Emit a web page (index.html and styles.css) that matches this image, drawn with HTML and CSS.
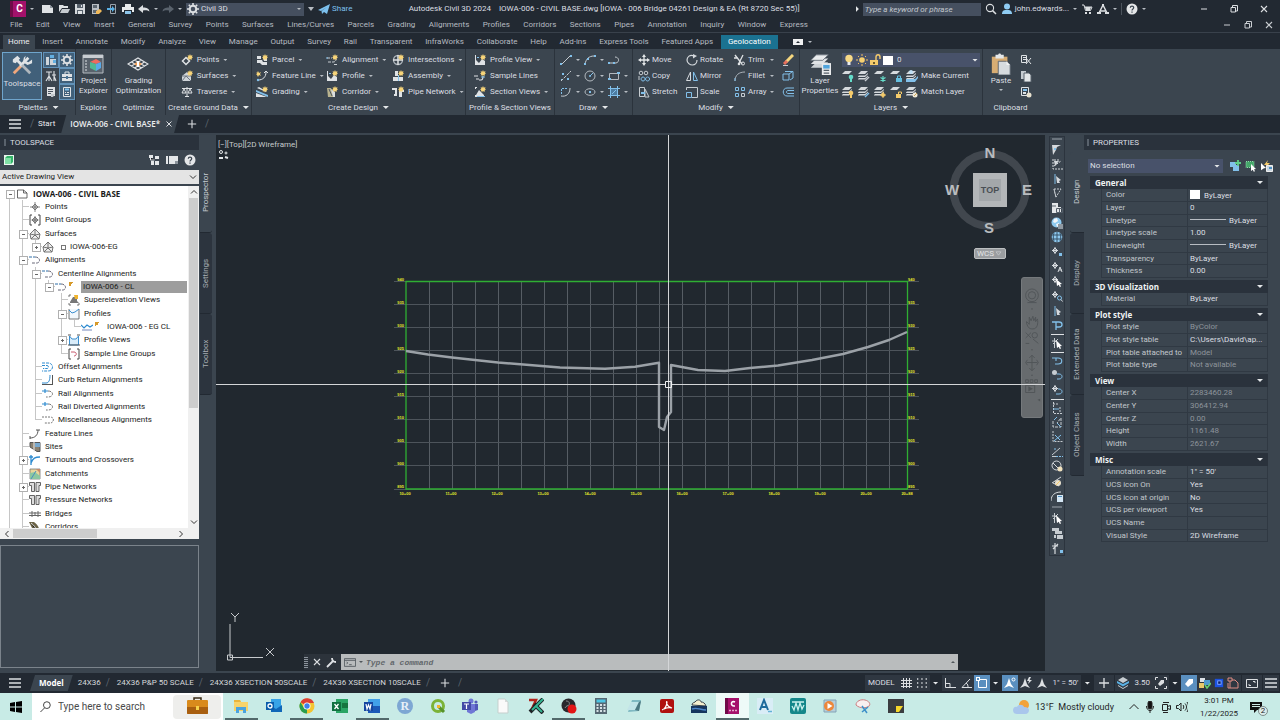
FILE: index.html
```html
<!DOCTYPE html>
<html lang="en">
<head>
<meta charset="utf-8">
<title>Autodesk Civil 3D 2024</title>
<link rel="stylesheet" href="styles.css">
</head>
<body>
<svg class="defs" aria-hidden="true">
<defs>
<symbol id="new" viewBox="0 0 12 12"><path fill="#dfe2e5" d="M0 2h8l3 3v5H0z"/><path fill="#8c949c" d="M8 2v3h3z"/></symbol>
<symbol id="open" viewBox="0 0 12 12"><path fill="#dfe2e5" d="M1 2h4l1 1h4v2H4L1 9z"/><path fill="#c6cbd0" d="M4 6h8l-2 4H2z"/></symbol>
<symbol id="save" viewBox="0 0 12 12"><path fill="#d5d9dd" d="M1 1h10v10H1z"/><path fill="#56606b" d="M3 1h6v4H3zM3 7h6v4H3z"/><path fill="#dfe2e5" d="M4 8h4v3H4zM7 2h1v2H7z"/></symbol>
<symbol id="saveas" viewBox="0 0 12 12"><path fill="#b9bec4" d="M2 1h7v10H2z"/><path fill="#5c6670" d="M3 2h4v3H3zM3 7h4v3H3z"/><path fill="#f0b95a" d="M6 8l4-2 2 2-3 3H6z"/></symbol>
<symbol id="export" viewBox="0 0 12 12"><path fill="none" stroke="#9aa3ab" d="M4.500 1.500h5v9h-5z"/><path fill="#5ab0e4" d="M1 5h5V3l3 3-3 3V7H1z"/></symbol>
<symbol id="print" viewBox="0 0 12 12"><path fill="#e8eaec" d="M3 1h6v3H3zM0 4h12v5h-2V7H2v2H0z"/><path fill="#8ec5ea" d="M3 8h6v3H3z"/></symbol>
<symbol id="undo" viewBox="0 0 12 12"><path fill="currentColor" d="M0 6l5-4v2.500c4 0 6 1 6.500 4-2-1.500-4-1.500-6.500-1V10z"/></symbol>
<symbol id="redo" viewBox="0 0 12 12"><path fill="#59626c" d="M12 6L7 2v2.500c-4 0-6 1-6.500 4 2-1.500 4-1.500 6.500-1V10z"/></symbol>
<symbol id="gear" viewBox="0 0 12 12"><circle cx="6" cy="6" r="3.300" fill="none" stroke="currentColor" stroke-width="2"/><path stroke="currentColor" stroke-width="1.600" d="M6 0v2M6 10v2M0 6h2M10 6h2M1.800 1.800l1.400 1.400M8.800 8.800l1.400 1.400M1.800 10.200l1.400-1.400M8.800 3.200l1.400-1.400"/></symbol>
<symbol id="plane" viewBox="0 0 12 12"><path fill="#7cc0ee" d="M0 7l12-6-3 10-3-2-2 2-.5-3L9 4 3 8z"/></symbol>
<symbol id="mag" viewBox="0 0 12 12"><circle cx="5" cy="5" r="3.600" fill="none" stroke="currentColor" stroke-width="1.100"/><path stroke="currentColor" stroke-width="1.500" d="M7.600 7.600L11 11"/></symbol>
<symbol id="user" viewBox="0 0 12 12"><circle cx="6" cy="3.500" r="3" fill="#8fcbf2"/><path fill="#8fcbf2" d="M1 11c0-4 2.500-4 5-4s5 0 5 4z"/></symbol>
<symbol id="cart" viewBox="0 0 12 12"><path fill="none" stroke="currentColor" d="M1 2h2l1.500 5.500h5L11 4H4"/><path fill="currentColor" d="M4 4h6l-1 3H5zM4 9h2v2H4zM8 9h2v2H8z"/></symbol>
<symbol id="appA" viewBox="0 0 12 12"><path fill="none" stroke="currentColor" stroke-width="1.500" d="M6 2L2 10M6 2l4 8M3 8h6"/><path fill="currentColor" d="M5 1h2v2H5zM0 9h4v2H0zM8 9h4v2H8z"/></symbol>
<symbol id="help" viewBox="0 0 12 12"><circle cx="6" cy="6" r="5.500" fill="#e4e6e8"/><path fill="none" stroke="#3b454f" stroke-width="1.200" d="M4.300 4.800c0-2.200 3.400-2.200 3.400 0 0 1.200-1.700 1.200-1.700 2.700M6 8.500v1.200"/></symbol>
<symbol id="min" viewBox="0 0 12 12"><path stroke="currentColor" d="M3 6h6"/></symbol>
<symbol id="max" viewBox="0 0 12 12"><path fill="none" stroke="currentColor" d="M3 4.500h4.500V9H3zM4.500 4V2.500h5V8H8"/></symbol>
<symbol id="close" viewBox="0 0 12 12"><path stroke="currentColor" stroke-width="1.100" d="M3 3l6 6M9 3l-6 6"/></symbol>
<symbol id="plus" viewBox="0 0 12 12"><path stroke="currentColor" stroke-width="1.300" d="M6 1v10M1 6h10"/></symbol>
<symbol id="menu" viewBox="0 0 12 12"><path stroke="currentColor" stroke-width="1.300" d="M0 2h12M0 6h12M0 10h12"/></symbol>
<symbol id="star" viewBox="0 0 12 12"><path fill="#f7d479" d="M9 0l.8 1.700L11.500 1 11 2.600l1 .9-1.300.6.3 1.700L9.500 5 9 6.500 8.300 5 6.800 5.700l.4-1.600L6 3.500l1.300-.9L6.500 1l1.700.7z"/></symbol>
<symbol id="tools" viewBox="0 0 24 24"><path stroke="#f0a77c" stroke-width="3" d="M3 21L12 12"/><path stroke="#dfe3e6" stroke-width="3" d="M10 13l9-9M7 7l6 6"/><path stroke="#b0b7bd" stroke-width="3" d="M12 12l9 9"/><path fill="#dfe3e6" d="M2 6l5-4 3 3-5 5-3-1zM16 2l-1 5 4 2 4-3v4l-5 2-5-3 1-5z"/></symbol>
<symbol id="p1" viewBox="0 0 12 12"><path fill="#cfd5da" d="M1 3h3v8H1zM5 5h6v6H5z"/><path fill="#64afe0" d="M5 1h4v3H5zM8 6h3v3H8z"/></symbol>
<symbol id="p3" viewBox="0 0 12 12"><path fill="none" stroke="#dfe2e5" stroke-width="1.100" d="M1 2h6M4 2v4M4 6L1 11M4 6l3 5M4 6v5M9 1v10M7 5h4M9 6l2 5"/></symbol>
<symbol id="p4" viewBox="0 0 12 12"><path fill="#dfe2e5" d="M1 4h10v3H1zM1 8h10v3H1z"/><path fill="none" stroke="#dfe2e5" d="M4 4V2h4v2"/><path fill="#4a7396" d="M5 6h2v3H5z"/></symbol>
<symbol id="p5" viewBox="0 0 12 12"><path fill="#dfe2e5" d="M2 1h8v9H2z"/><path stroke="#4c5661" d="M3 3.500h5M3 5.500h5M3 7.500h3"/><path fill="#c2c7cc" d="M6 8h4l-2 3H6z"/></symbol>
<symbol id="p6" viewBox="0 0 12 12"><path fill="none" stroke="#dfe2e5" d="M2.500 1.500h7v9h-7z"/><path fill="#82c0ea" d="M4 2.500h4v2H4z"/><path fill="#dfe2e5" d="M4 6h1v1H4zM6 6h2v1H6zM4 8h4v1H4z"/></symbol>
<symbol id="project" viewBox="0 0 22 22"><path fill="#59626c" stroke="#b5bbc1" d="M1 2h20v18H1z"/><path fill="#c8cdd2" d="M1 2h20v3H1z"/><path stroke="#dfe2e5" stroke-dasharray="2 1" d="M4 7v11"/><path fill="#ee6b5e" d="M8 9l6-3 5 3-5 2z"/><path fill="#50b893" d="M8 9l6 2v7l-6-3z"/><path fill="#58a9e8" d="M19 9l-5 2v7l5-3z"/></symbol>
<symbol id="grade" viewBox="0 0 22 14"><path fill="none" stroke="#dfe2e5" stroke-width="1.200" d="M1 7l10-6 10 6-10 6zM4.500 5l10 6M7.500 3l10 6M14.500 3l-10 6M17.500 5l-10 6"/><path fill="#ef9d55" d="M7 7l4-2.500L15 7l-4 2.500z"/><path fill="#fff" d="M10 4h2v6h-2z"/></symbol>
<symbol id="pt" viewBox="0 0 12 12"><path fill="none" stroke="#dfe2e5" stroke-width="1.500" d="M5 3.500L1.500 7 5 10.500 8.500 7z"/><use href="#star"/></symbol>
<symbol id="surf" viewBox="0 0 12 12"><path fill="#cfd4d9" d="M1 6l5-4 4 4v5H1z"/><path fill="none" stroke="#707983" d="M1 11l4-5 5 5M1 6h9"/><use href="#star"/></symbol>
<symbol id="trav" viewBox="0 0 12 12"><path fill="none" stroke="#dfe2e5" d="M1 2.500h10M6 1v9M3 3L1 7h4zM9 3L7 7h4zM4 10.500h4"/></symbol>
<symbol id="parcel" viewBox="0 0 12 12"><path fill="#dfe2e5" d="M1 2h4v3H1zM1 6h5l1 2h4v3H6L4 9H1zM7 4h4v3H8z"/><use href="#star"/></symbol>
<symbol id="fline" viewBox="0 0 12 12"><path fill="none" stroke="#dfe2e5" d="M2 10c5 0 8-3 8-8M8 3l2-2 2 2"/><path fill="#f7d479" d="M2 1l1 2 2-1-1 2 1 2-2-1-1 2-1-2-1 0 1-1-1-2 1 1z"/><circle cx="2" cy="10" r="1.200" fill="#82c0ea"/></symbol>
<symbol id="grading" viewBox="0 0 12 12"><path fill="#82c0ea" d="M0 4l12 5v2L0 6z"/><path fill="#dfe2e5" d="M0 7l11 4H0zM1 2l9 4V5L3 1z"/><use href="#star"/></symbol>
<symbol id="align" viewBox="0 0 12 12"><path fill="none" stroke="#c9ced3" stroke-dasharray="3 1" d="M1 4h5M2 8h5c3 0 3-2 3-3M8 10.500h3"/><path stroke="#82c0ea" d="M0 4h2"/><use href="#star"/></symbol>
<symbol id="profile" viewBox="0 0 12 12"><path fill="#dfe2e5" d="M1 1h1v10H1zM2 11V6l3 3 3-4 3 2v4z"/><path fill="#82c0ea" d="M3 3h2v1H3z"/><use href="#star"/></symbol>
<symbol id="corr" viewBox="0 0 12 12"><path fill="#b8b28e" d="M1 2h4l4 9H2z"/><path fill="#d9dde0" d="M5 3l4 3v5H7z"/><path stroke="#4c5661" d="M3 3l3 7"/><use href="#star"/></symbol>
<symbol id="inter" viewBox="0 0 12 12"><circle cx="6" cy="6" r="4.500" fill="none" stroke="#aab1b8" stroke-width="1.400"/><path stroke="#dfe2e5" stroke-width="1.500" d="M6 1v10M1 6h10"/><use href="#star"/></symbol>
<symbol id="assem" viewBox="0 0 12 12"><path fill="#dfe2e5" d="M3 1h3v5H3zM1 7h5v4H1zM7 7h4v4H7z"/><path fill="#82c0ea" d="M6 5h1v6H6z"/><use href="#star"/></symbol>
<symbol id="pipe" viewBox="0 0 12 12"><path fill="#dfe2e5" d="M0 2h5v8H2V8h1V4H0zM7 4h5v2h-2v5H7z"/><use href="#star"/></symbol>
<symbol id="sline" viewBox="0 0 12 12"><path fill="none" stroke="#dfe2e5" stroke-width="1.200" d="M0 6h4M5 10h2c2 0 2-2 2-4M2 9h3"/><path stroke="#82c0ea" d="M7 7h4"/><use href="#star"/></symbol>
<symbol id="sview" viewBox="0 0 12 12"><path fill="#dfe2e5" d="M1 1h2v1H2v1H1zM1 9h1v1h1v1H1zM2 9l3-5 2 2 3 3v1H2z"/><path fill="#82c0ea" d="M3 10h8v1H3z"/><use href="#star"/></symbol>
<symbol id="line" viewBox="0 0 12 12"><path stroke="#c6ccd1" d="M2 10l8-8"/><path fill="#82c0ea" d="M0 9h2v2H0zM10 1h2v2h-2z"/></symbol>
<symbol id="arc" viewBox="0 0 12 12"><path fill="none" stroke="#c6ccd1" d="M1 10C2 5 5 2 10 2"/><path fill="#82c0ea" d="M0 9h2v2H0zM10 1h2v2h-2zM3 4h2v2H3z"/></symbol>
<symbol id="pline" viewBox="0 0 12 12"><path fill="none" stroke="#c6ccd1" d="M2 9h6c4-1 3-6-1-6"/><path fill="#82c0ea" d="M0 8h2v2H0zM5 8h2v2H5z"/></symbol>
<symbol id="ptsx" viewBox="0 0 12 12"><path stroke="#c6ccd1" stroke-dasharray="3 1" d="M1 11L11 1"/><path fill="#82c0ea" d="M2 3h2v2H2zM7 8h2v2H7zM1 9h1v1H1z"/></symbol>
<symbol id="circ" viewBox="0 0 12 12"><circle cx="6" cy="6" r="5" fill="none" stroke="#b2b9bf"/><path stroke="#82c0ea" d="M6 6l3-3"/><circle cx="6" cy="6" r="1" fill="#82c0ea"/></symbol>
<symbol id="rect" viewBox="0 0 12 12"><path fill="none" stroke="#b2b9bf" d="M1.500 3.500h9v6h-9z"/><path fill="#82c0ea" d="M0 8h3v2H0zM9 2h3v2H9z"/></symbol>
<symbol id="spl" viewBox="0 0 12 12"><path fill="none" stroke="#c6ccd1" d="M1 10c5 1 9-2 9-8" /><path fill="none" stroke="#82c0ea" stroke-dasharray="2 1" d="M1.500 8V2.500H8"/></symbol>
<symbol id="ell" viewBox="0 0 12 12"><ellipse cx="6" cy="6" rx="5" ry="3.300" fill="none" stroke="#b2b9bf"/><path fill="#82c0ea" d="M5 5h2v2H5z"/></symbol>
<symbol id="hatch" viewBox="0 0 12 12"><path fill="#4d7da3" stroke="#c6ccd1" d="M2.500 2.500h7v7h-7z"/><path stroke="#82c0ea" d="M0 2.500h12M0 9.500h12M2.500 0v12M9.500 0v12M4 8l4-4"/></symbol>
<symbol id="move" viewBox="0 0 12 12"><path stroke="#e4e7e9" stroke-width="1.300" d="M6 2v8M2 6h8"/><path fill="#e4e7e9" d="M6 0l2 3H4zM6 12l2-3H4zM0 6l3-2v4zM12 6L9 4v4z"/></symbol>
<symbol id="copy" viewBox="0 0 12 12"><g fill="none" stroke="#c6ccd1"><circle cx="3" cy="3" r="1.800"/><circle cx="8" cy="3" r="1.800"/><path stroke="#82c0ea" d="M5 7a2 2 0 1 0 .1 0M9.500 7a2 2 0 1 0 .1 0"/><path d="M1 6v4"/></g></symbol>
<symbol id="stretch" viewBox="0 0 12 12"><path fill="none" stroke="#c6ccd1" d="M1.500 1.500h5v9h-5zM7 4v7h4L7 3"/><path fill="#82c0ea" d="M3 6h4v2H3z"/></symbol>
<symbol id="rotate" viewBox="0 0 12 12"><path fill="none" stroke="#d5d9dd" stroke-width="1.200" d="M8 2C4 0 1 3 1 6s3 5 5.500 5S11 9 11 6"/><path fill="#d5d9dd" d="M7 0l4 2-4 2.500z"/></symbol>
<symbol id="mirror" viewBox="0 0 12 12"><path fill="none" stroke="#82c0ea" d="M7.500 2v8.500h4z"/><path fill="none" stroke="#d5d9dd" d="M4.500 2v8.500h-4z"/></symbol>
<symbol id="scale" viewBox="0 0 12 12"><path fill="none" stroke="#c6ccd1" d="M.5 4V1.500h11v10h-6"/><path fill="none" stroke="#82c0ea" d="M.5 6.500h5v5h-5z"/></symbol>
<symbol id="trim" viewBox="0 0 12 12"><path fill="none" stroke="#dfe2e5" stroke-width="1.300" d="M1 1l7 9M9 1L5 9M0 4h4"/><circle cx="9" cy="9.500" r="1.500" fill="none" stroke="#dfe2e5"/><circle cx="5" cy="10" r="1.300" fill="#dfe2e5"/></symbol>
<symbol id="fillet" viewBox="0 0 12 12"><path fill="none" stroke="#aab1b8" d="M1 11C1 5 5 2 11 2"/><path stroke="#82c0ea" d="M1 11V8"/></symbol>
<symbol id="array" viewBox="0 0 12 12"><path fill="none" stroke="#82c0ea" d="M1.500 1.500h3v3h-3zM7.500 1.500h3v3h-3zM1.500 7.500h3v3h-3z"/><path fill="none" stroke="#c6ccd1" d="M7.500 7.500h3v3h-3z"/></symbol>
<symbol id="erase" viewBox="0 0 12 12"><path stroke="#f6d77f" stroke-width="3" d="M4 8l7-7"/><path stroke="#e7725f" stroke-width="3" d="M2 10l3-3"/><path stroke="#c6ccd1" d="M1 11.500h5"/></symbol>
<symbol id="cube" viewBox="0 0 12 12"><path fill="none" stroke="#82c0ea" d="M1 4h6v6H1zM3 1.500h8V8L8 10M7 4l3-2"/></symbol>
<symbol id="off" viewBox="0 0 12 12"><path fill="none" stroke="#82c0ea" d="M12 2H5C0 2 0 10 5 10h7M12 4.500H6c-2 0-2 3 0 3h6"/></symbol>
<symbol id="layers" viewBox="0 0 24 24"><path fill="#cdd2d6" d="M2 16l6-6h13l-6 6z"/><path fill="#dfe2e5" d="M2 12l6-6h13l-6 6z"/><path fill="#e9ebed" stroke="#6b747e" d="M2 8l6-6h13l-6 6z"/><path fill="#e9ebed" d="M14 11h10v13H14z"/><path fill="#4fa4dd" d="M15.500 13h7v4h-7z"/><path stroke="#555f69" stroke-width="1.500" d="M16 19h6M16 22h6"/></symbol>
<symbol id="bulb" viewBox="0 0 12 12"><circle cx="6" cy="4.500" r="3.700" fill="#f7d986"/><path fill="#e8eaec" d="M4.500 8h3v3h-3z"/></symbol>
<symbol id="sun" viewBox="0 0 12 12"><circle cx="6" cy="6" r="2.800" fill="#f7d070"/><path stroke="#f0c060" d="M6 0v2M6 10v2M0 6h2M10 6h2M2 2l1 1M9 9l1 1M2 10l1-1M9 3l1-1"/></symbol>
<symbol id="lock" viewBox="0 0 12 12"><path fill="#f5cb6b" d="M1 6h8v5H1z"/><path fill="none" stroke="#f5cb6b" stroke-width="1.400" d="M7 6V3c0-3 4-3 4 0v2"/><path fill="#6b5a2a" d="M4 8h2v2H4z"/></symbol>
<symbol id="lay" viewBox="0 0 12 12"><path fill="#d5d9dd" d="M0 4l3-3h7L7 4z"/></symbol>
<symbol id="lay3" viewBox="0 0 12 12"><path fill="#d5d9dd" d="M0 4l3-3h7L7 4zM0 6.500l1-1h6L10 3v1L7 7H0zM0 9l1-1h6l3-2.500V6.500L7 9.500H0z"/></symbol>
<symbol id="l1" viewBox="0 0 12 12"><use href="#lay"/><circle cx="9" cy="7" r="2.300" fill="#64dbc9"/><path fill="#64dbc9" d="M8 9h2v3H8z"/></symbol>
<symbol id="l2" viewBox="0 0 12 12"><use href="#lay3"/><path stroke="#c6ccd1" stroke-width="1.500" d="M7 11l4-4"/></symbol>
<symbol id="l3" viewBox="0 0 12 12"><use href="#lay"/><path stroke="#64dbc9" stroke-width="1.200" d="M9 6v6M6.500 7.500l5 3M11.500 7.500l-5 3"/></symbol>
<symbol id="l4" viewBox="0 0 12 12"><use href="#lay"/><path fill="#64bfe0" d="M6 8h6v4H6z"/><path fill="none" stroke="#64bfe0" d="M7.500 8V6h3v2"/></symbol>
<symbol id="l5" viewBox="0 0 12 12"><use href="#lay3"/><path fill="#82c0ea" d="M0 9h9l3-3v2l-3 4H0z"/><circle cx="5" cy="2" r="2" fill="#bfe0f5"/></symbol>
<symbol id="m1" viewBox="0 0 12 12"><use href="#lay3"/><circle cx="9" cy="7" r="2.300" fill="#f5cb6b"/><path fill="#f5cb6b" d="M8 9h2v3H8z"/></symbol>
<symbol id="m2" viewBox="0 0 12 12"><use href="#lay3"/><path stroke="#82c0ea" stroke-width="1.500" d="M7 11l4-4"/></symbol>
<symbol id="m3" viewBox="0 0 12 12"><use href="#lay3"/><circle cx="9" cy="9" r="2" fill="#f5cb6b"/><path stroke="#f5cb6b" d="M9 5.500v6.500M6 9h6"/></symbol>
<symbol id="m4" viewBox="0 0 12 12"><use href="#lay"/><path fill="#f5cb6b" d="M6 8h5v4H6z"/><path fill="none" stroke="#f5cb6b" d="M8.500 8V6h3v2"/></symbol>
<symbol id="m5" viewBox="0 0 12 12"><use href="#lay3"/><circle cx="9" cy="9" r="2.500" fill="#f1ead8"/><path stroke="#c9a35a" d="M8 10l3-3"/></symbol>
<symbol id="paste" viewBox="0 0 22 24"><path fill="#d8ad73" d="M1 4h17v18H1z"/><path fill="#e4e7e9" d="M5 2h3c0-2 3-2 3 0h3v4H5z"/><path fill="#d7dbde" stroke="#59626c" d="M8 9h9l4 4v11H8z"/><path fill="#f2f3f4" d="M17 9v4h4z"/></symbol>
<symbol id="cut" viewBox="0 0 12 12"><path fill="none" stroke="#dfe2e5" d="M1.500 1.500h5v7h-5zM3 3.500h3M3 5.500h3M6 4l5 6M11 4L6 10"/></symbol>
<symbol id="dup" viewBox="0 0 12 12"><path fill="#c6ccd1" d="M1 1h5v8H1z"/><path fill="#e4e7e9" stroke="#59626c" d="M4 3h5l2 2v7H4z"/></symbol>
<symbol id="pspec" viewBox="0 0 12 12"><path fill="none" stroke="#dfe2e5" d="M1.500 1.500h7v8h-7z"/><path fill="#82c0ea" d="M3 3h4v2H3z"/><path fill="#dfe2e5" d="M3 6h3v2H3z"/><circle cx="9" cy="9" r="2.500" fill="#e8e1cf"/></symbol>
<symbol id="cubeg" viewBox="0 0 12 12"><path fill="#e9f7ee" d="M1 1h10v10H1z"/><path fill="#35b56a" d="M2 4l2-2h6v6l-2 2H2z"/><path fill="#7fe0a5" d="M2 4h6v6H2z"/></symbol>
<symbol id="tree1" viewBox="0 0 12 12"><path fill="#e4e7e9" d="M1 1h4v3H1zM7 2h4v3H7zM7 7h4v4H7zM3 7h3v4H3z"/><path stroke="#e4e7e9" d="M2.500 4v2h4"/></symbol>
<symbol id="panel" viewBox="0 0 12 12"><path fill="#e4e7e9" d="M0 2h2v8H0zM3 2h9v8H3z"/><path fill="#8c949c" d="M9 7h3v3H9z"/></symbol>
<symbol id="doc" viewBox="0 0 12 12"><path fill="#fff" stroke="#444" stroke-width=".8" d="M1.500 2h6L11 5v5H1.500zM7.500 2v3H11"/></symbol>
<symbol id="tpt" viewBox="0 0 12 12"><path fill="#d6d6d6" stroke="#666" d="M6 3L3 6l3 3 3-3zM6 1v10M1 6h10" stroke-width=".8"/></symbol>
<symbol id="tpg" viewBox="0 0 12 12"><path fill="none" stroke="#444" d="M3 1H1v10h2M9 1h2v10H9" /><path fill="#bbb" stroke="#666" stroke-width=".8" d="M6 3L3 6l3 3 3-3zM6 2v8M2.500 6h7"/></symbol>
<symbol id="tsf" viewBox="0 0 12 12"><path fill="#eee" stroke="#666" stroke-width=".9" d="M1 6l5-5 5 5-1 5H2zM1 6l5 1 5-1M6 1v6l-4 4M6 7l4 4"/></symbol>
<symbol id="tal" viewBox="0 0 12 12"><path fill="none" stroke="#2e6fa8" stroke-dasharray="3 1" d="M0 3h6"/><path fill="none" stroke="#667" stroke-dasharray="3 1" d="M6 3c6 0 6 7 0 6H3"/></symbol>
<symbol id="tse" viewBox="0 0 12 12"><path fill="none" stroke="#555" stroke-width=".8" d="M3 1H1v2M1 9v2h2M9 11h2V9"/><path fill="#777" d="M2 8l3-5h4v4l2 2H2z"/><path fill="#f0b42e" d="M6 1h4v4H7z"/></symbol>
<symbol id="tpf" viewBox="0 0 12 12"><path fill="#f2f8fc" stroke="#555" stroke-width=".8" d="M1 1v10h10V1"/><path fill="none" stroke="#3c8fcf" d="M1 2l3 3 3-1 4-3"/></symbol>
<symbol id="teg" viewBox="0 0 12 12"><path fill="none" stroke="#2e8bd0" stroke-width="1.200" d="M0 4l3 3 3-3 3 2 3-2"/><path stroke="#78b" d="M1 9h10"/></symbol>
<symbol id="tpv" viewBox="0 0 12 12"><path fill="#d9ecf9" stroke="#3c8fcf" d="M1.500 2v9h9V2L8 5H4z"/><path stroke="#555" d="M0 1h3M9 1h3M0 11h12"/></symbol>
<symbol id="tsl" viewBox="0 0 12 12"><path fill="none" stroke="#444" d="M3 1H1v10h2M9 1h2v10H9"/><path fill="none" stroke="#c85b6f" d="M3 4h3c3 0 3 4 0 4"/></symbol>
<symbol id="tof" viewBox="0 0 12 12"><path fill="none" stroke="#2e8bd0" stroke-dasharray="3 1" d="M0 2h6c6 0 6 8 0 8H0M0 4.500h5c2 0 2 3 0 3H1"/></symbol>
<symbol id="tcr" viewBox="0 0 12 12"><path fill="none" stroke="#2e8bd0" d="M0 9h4c3 0 4-3 4-8"/><path stroke="#555" d="M0 10.500h11M10.500 1v10"/></symbol>
<symbol id="trl" viewBox="0 0 12 12"><path stroke="#2e8bd0" stroke-width="1.200" d="M0 3h6M3 1v4"/><path fill="none" stroke="#777" stroke-dasharray="3 1" d="M6 3c6 0 6 6 0 6H4"/></symbol>
<symbol id="tms" viewBox="0 0 12 12"><path fill="none" stroke="#777" stroke-dasharray="2 1" d="M0 3h8c5 0 4 6 0 6H2"/></symbol>
<symbol id="tfl" viewBox="0 0 12 12"><path fill="none" stroke="#555" d="M1 10c5 0 8-3 8-8M7 2h4M1 8v3"/></symbol>
<symbol id="tst" viewBox="0 0 12 12"><path fill="#8b8171" stroke="#555" d="M1 1.500h10v9H8L1 6z"/><path fill="#79a9cf" d="M6 2h5v4H6z"/><path stroke="#eee" d="M5 1v10"/></symbol>
<symbol id="ttn" viewBox="0 0 12 12"><path fill="none" stroke="#2e8bd0" stroke-width="1.300" d="M2 1v10M2 9c2-5 4-6 9-6M0 3h4"/></symbol>
<symbol id="tct" viewBox="0 0 12 12"><path fill="#e9d59a" stroke="#777" stroke-width=".8" d="M1 1h10v10H1z"/><path fill="#8cc7a1" d="M1 5l5-1 5 4v3H1z"/><path fill="#c98a6a" d="M7 1h4v4z"/><path stroke="#4a8fc0" d="M2 11l5-8"/></symbol>
<symbol id="tpn" viewBox="0 0 12 12"><path fill="#ddd" stroke="#555" stroke-width=".9" d="M.5 1.500h5v9h-3v-6h-2zM7 1.500h4.500v3H10v6H7z"/></symbol>
<symbol id="tbr" viewBox="0 0 12 12"><path fill="none" stroke="#666" d="M0 5h12M0 7.500h12M3 3v6M9 3v6M6 4v4"/></symbol>
<symbol id="tco" viewBox="0 0 12 12"><path fill="#6b6346" d="M0 1h5c3 2 5 5 6 10H5z"/><path stroke="#ddd" d="M2 2c3 2 5 5 6 9"/></symbol>
<symbol id="flag" viewBox="0 0 12 12"><path fill="#d5d9dd" d="M1 2h9L6 4 5 7 2 12z"/><path fill="#82c0ea" d="M3 5h2v2H3z"/></symbol>
<symbol id="flagd" viewBox="0 0 12 12"><path fill="none" stroke="#d5d9dd" stroke-dasharray="2 1" d="M2 1v10h10M3 2h6M3 8l7-5"/><path fill="#d5d9dd" d="M3 3h5L4 8z"/></symbol>
<symbol id="flags" viewBox="0 0 12 12"><path stroke="#82c0ea" d="M4 1v10"/><path fill="#d5d9dd" d="M5 3l5 4-2 1 1 2H6z"/></symbol>
<symbol id="flagn" viewBox="0 0 12 12"><path fill="none" stroke="#c6ccd1" stroke-dasharray="2 1" d="M3 2h7L5 10zM3 2l2 9"/></symbol>
<symbol id="sheet" viewBox="0 0 12 12"><path fill="#e4e7e9" d="M1 1h6v4h3v6H1z"/><path fill="none" stroke="#56606b" d="M5.500 6.500h6v4h-6zM8.500 6v5M1 4h4"/></symbol>
<symbol id="globe" viewBox="0 0 12 12"><circle cx="5.500" cy="5.500" r="5" fill="#8ecaf0"/><path fill="#f1f6f9" d="M3 2l3-1 1 3-3 2-2-1zM5 7l3-1v3l-2 1z"/><path fill="#8f98a1" d="M7 7h5v5H7z"/></symbol>
<symbol id="globe2" viewBox="0 0 12 12"><circle cx="6" cy="6" r="5.300" fill="#8ecaf0"/><path fill="none" stroke="#39546b" d="M1 4h10M1 8h10M6 1v10M3 2c-1 3-1 5 0 8M9 2c1 3 1 5 0 8"/></symbol>
<symbol id="node" viewBox="0 0 12 12"><path fill="none" stroke="#d5d9dd" d="M4 2L1.500 4.500 4 7l2.500-2.500zM4 1v7M1 4.500h6"/></symbol>
<symbol id="n1" viewBox="0 0 12 12"><use href="#node"/><path fill="#82c0ea" d="M8 7h3v3H8z"/></symbol>
<symbol id="n2" viewBox="0 0 12 12"><use href="#node"/><path fill="none" stroke="#d5d9dd" d="M7 11l2-5 2 5M8 9h3"/></symbol>
<symbol id="n3" viewBox="0 0 12 12"><use href="#node"/><path fill="#fff" d="M5 4l6 5-2 .3 1 2.200-1.200.5-1-2.200L6 11z"/></symbol>
<symbol id="n4" viewBox="0 0 12 12"><use href="#node"/><circle cx="8.500" cy="8" r="2" fill="none" stroke="#82c0ea"/><path stroke="#d5d9dd" d="M10 9.500l1.500 2"/></symbol>
<symbol id="bigP" viewBox="0 0 12 12"><path fill="none" stroke="#82c0ea" stroke-width="1.300" d="M1 3h7c4 0 4 5 0 5H5M5 3v8"/></symbol>
<symbol id="hook" viewBox="0 0 12 12"><path fill="none" stroke="#82c0ea" stroke-width="1.100" d="M1 3h4v3M5 3h2c5 0 5 6 0 6H4"/></symbol>
<symbol id="hook2" viewBox="0 0 12 12"><circle cx="3.500" cy="3.500" r="2.500" fill="#c6ccd1"/><path fill="none" stroke="#82c0ea" d="M6 5h2c4 0 4 5 0 5H6"/></symbol>
<symbol id="hook3" viewBox="0 0 12 12"><use href="#node"/><path fill="none" stroke="#82c0ea" d="M7 5h1c4 0 4 5 0 5H5"/></symbol>
<symbol id="ax1" viewBox="0 0 12 12"><path fill="none" stroke="#c6ccd1" stroke-dasharray="2 1" d="M2.500 0v11.500H12M2 2h5M9 5v5"/><path stroke="#82c0ea" d="M2 7h6"/></symbol>
<symbol id="ax2" viewBox="0 0 12 12"><path fill="none" stroke="#c6ccd1" stroke-dasharray="3 1" d="M2 5v6h8V2L6 7"/><path stroke="#82c0ea" d="M3 4l3-3M6 7l4 4"/></symbol>
<symbol id="ax3" viewBox="0 0 12 12"><path fill="none" stroke="#c6ccd1" stroke-dasharray="2 1" d="M2 0v10.500h10"/><path fill="none" stroke="#82c0ea" d="M3 10l7-6M4 4l5 5"/></symbol>
<symbol id="ax4" viewBox="0 0 12 12"><path fill="none" stroke="#c6ccd1" d="M1 9L9 2M1 10.500h4"/><path stroke="#82c0ea" stroke-dasharray="2 1" d="M5 10.500h7M3 3h3"/></symbol>
<symbol id="ball" viewBox="0 0 12 12"><circle cx="5.500" cy="5.500" r="4.500" fill="none" stroke="#d5d9dd"/><path stroke="#d5d9dd" d="M2 3l5 5"/><circle cx="9" cy="9" r="2.500" fill="#f1e3c0"/></symbol>
<symbol id="tri" viewBox="0 0 12 12"><path fill="none" stroke="#d5d9dd" d="M1 8l9-6M2 8l6 3"/><circle cx="7" cy="8" r="3" fill="#e8e1cf"/><path stroke="#f5cb6b" d="M5 10l4-4"/></symbol>
<symbol id="acal" viewBox="0 0 12 12"><path fill="none" stroke="#d5d9dd" d="M0 11c0-6 4-9 10-9"/><path fill="#d5e7f5" d="M6 5h6v7H6z"/><path fill="#4f8fc0" d="M7 6h4v1H7z"/></symbol>
<symbol id="tcur" viewBox="0 0 12 12"><path fill="none" stroke="#c6ccd1" d="M1 4h5M3.500 1v10M2 7l5-5"/><path fill="#fff" d="M5 3l6 6-2 .3 1 2.200-1.200.5-1-2.200L6 11z"/></symbol>
<symbol id="tbox" viewBox="0 0 12 12"><path fill="#c6ccd1" d="M1 1h7v3h3v3H4V4H1zM6 8h6v4H6zM3 8h2v3H3z"/></symbol>
<symbol id="tdot" viewBox="0 0 12 12"><path fill="none" stroke="#d5d9dd" stroke-width="1.200" d="M1 4h6M4 1v11M2 7l5-5"/><path fill="#82c0ea" d="M9 8h3v3H9z"/></symbol>
<symbol id="q1" viewBox="0 0 12 12"><path fill="#82c0ea" d="M1 2h6v5H1zM4 5h6v6H4z"/><path stroke="#5fd08a" stroke-width="1.800" d="M9 0v6M6 3h6"/></symbol>
<symbol id="q2" viewBox="0 0 12 12"><path fill="#45a86b" stroke="#8fe0ab" stroke-dasharray="1 1" d="M1 1.500h8v6H1z"/><path fill="#fff" d="M6 4l5 5-2 .2 1 2-1.200.6-1-2L6 11z"/></symbol>
<symbol id="q3" viewBox="0 0 12 12"><path fill="#fff" d="M0 3l5 5-2 .2-3 2z"/><path fill="#f5cb6b" d="M7 0L3 5h3L4 8l5-5H6z"/><path fill="#c9d7e2" stroke="#eee" d="M5.500 5.500h6v6h-6z"/><path fill="#4f8fc0" d="M8 7h3v2H8z"/></symbol>
<symbol id="grid" viewBox="0 0 12 12"><path stroke="currentColor" d="M3.500 1v10M6.500 1v10M9.500 1v10M1 3.500h11M1 6.500h11M1 9.500h11"/></symbol>
<symbol id="dots" viewBox="0 0 12 12"><path stroke="currentColor" stroke-width="1.300" stroke-dasharray="1.300 3" d="M1 2h11M1 6h11M1 10h11"/></symbol>
<symbol id="ortho" viewBox="0 0 12 12"><path fill="none" stroke="currentColor" d="M1.500 1v9.500H12M2 6.500h4V10"/></symbol>
<symbol id="angle" viewBox="0 0 12 12"><path fill="none" stroke="currentColor" d="M10 2L2 10.500h10M6 6c2 1 2 3 2 4"/></symbol>
<symbol id="osnap" viewBox="0 0 12 12"><path fill="none" stroke="#fff" d="M2.500 2.500h8v8h-8z"/><path fill="#fff" d="M0 0h4v4H0z"/><path fill="#5a8fbf" d="M1 1h2v2H1z"/></symbol>
<symbol id="ann" viewBox="0 0 12 12"><path fill="currentColor" d="M6 1l2 6 3 4-5-2-5 2 3-4z"/></symbol>
<symbol id="ann2" viewBox="0 0 12 12"><path fill="currentColor" d="M5 1l2 6 3 4-5-2-5 2 3-4z"/><circle cx="9.500" cy="2.500" r="1.500" fill="none" stroke="currentColor"/></symbol>
<symbol id="ann3" viewBox="0 0 12 12"><path fill="currentColor" d="M5 1l2 6 3 4-5-2-5 2 3-4zM9 0L7 4h2L8 7l4-4H9.500L11 0z"/></symbol>
<symbol id="stack" viewBox="0 0 12 12"><path fill="#c6ccd1" d="M6 0l5 3-5 3-5-3zM1 8l5 3 5-3v1l-5 3-5-3z"/><path fill="#5ab0e4" d="M0 4l6 3 6-3v2L6 9.500 0 6z"/></symbol>
<symbol id="tag" viewBox="0 0 12 12"><path fill="currentColor" d="M2 7l4-5h4v4l-5 4z"/></symbol>
<symbol id="tagb" viewBox="0 0 12 12"><path fill="none" stroke="currentColor" d="M3 .5H.5V3M9 .5h2.500V3M3 11.500H.5V9M9 11.500h2.500V9"/><path fill="currentColor" d="M3 7l3-4h3v3l-4 3z"/></symbol>
<symbol id="mon" viewBox="0 0 12 12"><path fill="#dce1e6" d="M1 1h5v4H1z"/><path fill="#e8c96c" d="M0 6h5v5H0z"/><path fill="#4f9ad0" d="M5 3h6v5H5z"/><path fill="none" stroke="#66cf6f" stroke-width="1.600" d="M6 8l2 3 4-5"/></symbol>
<symbol id="bluesq" viewBox="0 0 12 12"><path fill="#1c52e0" d="M1 1h10v10H1z"/><path fill="#8fb2ff" d="M4 3h5v5H4z"/><path fill="#0b1f66" d="M5 4h3v3H5z"/></symbol>
<symbol id="wall" viewBox="0 0 12 12"><path fill="none" stroke="#e08d84" d="M1 1h4v3H1zM1 6v5h10V6L8 3H5M3 4v7"/></symbol>
<symbol id="full" viewBox="0 0 12 12"><path fill="none" stroke="currentColor" d="M.5 2.500h11v8H.5zM3 7v1.500h2M7 4.500h2V6"/></symbol>
</defs>
</svg>

<header class="titlebar">
  <div class="quick">
    <button class="logo" aria-label="Application menu">C</button><i class="ar"></i>
    <button class="first" aria-label="New"><svg class="ic"><use href="#new"/></svg></button>
    <button aria-label="Open"><svg class="ic"><use href="#open"/></svg></button>
    <button aria-label="Save"><svg class="ic"><use href="#save"/></svg></button>
    <button aria-label="Save as"><svg class="ic"><use href="#saveas"/></svg></button>
    <button aria-label="Export"><svg class="ic"><use href="#export"/></svg></button>
    <button aria-label="Plot"><svg class="ic"><use href="#print"/></svg></button>
    <button aria-label="Undo"><svg class="ic"><use href="#undo"/></svg></button><i class="ar"></i>
    <button aria-label="Redo"><svg class="ic"><use href="#redo"/></svg></button><i class="ar"></i>
    <span class="combo workspace"><svg class="ic"><use href="#gear"/></svg><select aria-label="Workspace"><option>Civil 3D</option></select><i class="ar"></i></span>
    <i class="ar custom"></i>
    <button class="share"><svg class="ic"><use href="#plane"/></svg>Share</button>
  </div>
  <h1 class="apptitle"><span>Autodesk Civil 3D 2024</span><span>IOWA-006 - CIVIL BASE.dwg [IOWA - 006 Bridge 04261 Design &amp; EA (Rt 8720 Sec 55)]</span></h1>
  <div class="account">
    <i class="ar right"></i>
    <input class="keyword" type="text" aria-label="Search help" placeholder="Type a keyword or phrase">
    <button aria-label="Search"><svg class="ic"><use href="#mag"/></svg></button>
    <button class="who"><svg class="ic"><use href="#user"/></svg>john.edwards...</button><i class="ar"></i>
    <button aria-label="App store"><svg class="ic"><use href="#cart"/></svg></button>
    <button aria-label="Autodesk apps"><svg class="ic"><use href="#appA"/></svg></button><i class="ar"></i>
    <i class="bar"></i>
    <button aria-label="Help"><svg class="ic"><use href="#help"/></svg></button><i class="ar"></i>
  </div>
  <div class="wincontrols">
    <button aria-label="Minimize"><svg class="ic"><use href="#min"/></svg></button>
    <button aria-label="Restore"><svg class="ic"><use href="#max"/></svg></button>
    <button aria-label="Close"><svg class="ic"><use href="#close"/></svg></button>
  </div>
</header>

<nav class="menubar" aria-label="Menu">
  <div class="menus"><button>File</button><button>Edit</button><button>View</button><button>Insert</button><button>General</button><button>Survey</button><button>Points</button><button>Surfaces</button><button>Lines/Curves</button><button>Parcels</button><button>Grading</button><button>Alignments</button><button>Profiles</button><button>Corridors</button><button>Sections</button><button>Pipes</button><button>Annotation</button><button>Inquiry</button><button>Window</button><button>Express</button></div>
  <div class="wincontrols doc">
    <button aria-label="Minimize drawing"><svg class="ic"><use href="#min"/></svg></button>
    <button aria-label="Restore drawing"><svg class="ic"><use href="#max"/></svg></button>
    <button aria-label="Close drawing"><svg class="ic"><use href="#close"/></svg></button>
  </div>
</nav>

<nav class="ribbontabs" aria-label="Ribbon tabs">
  <div class="tabs"><button class="on">Home</button><button>Insert</button><button>Annotate</button><button>Modify</button><button>Analyze</button><button>View</button><button>Manage</button><button>Output</button><button>Survey</button><button>Rail</button><button>Transparent</button><button>InfraWorks</button><button>Collaborate</button><button>Help</button><button>Add-ins</button><button>Express Tools</button><button>Featured Apps</button><button class="geo">Geolocation</button></div>
  <button class="collapse" aria-label="Minimize ribbon"><i></i></button><i class="ar"></i>
</nav>

<section class="ribbon" aria-label="Ribbon">
  <div class="panel palettes">
    <div class="body">
      <button class="big on"><svg class="i22"><use href="#tools"/></svg>Toolspace</button>
      <div class="minis">
        <button class="on" aria-label="Prospector"><svg class="ic"><use href="#p1"/></svg></button><button class="on" aria-label="Settings"><svg class="ic"><use href="#gear"/></svg></button>
        <button aria-label="Survey"><svg class="ic"><use href="#p3"/></svg></button><button class="on" aria-label="Toolbox"><svg class="ic"><use href="#p4"/></svg></button>
        <button aria-label="Panorama"><svg class="ic"><use href="#p5"/></svg></button><button class="on" aria-label="Properties"><svg class="ic"><use href="#p6"/></svg></button>
      </div>
    </div>
    <h2>Palettes <i class="ar lg"></i></h2>
  </div>
  <div class="panel explore"><div class="body"><button class="big"><svg class="i22"><use href="#project"/></svg>Project<br>Explorer</button></div><h2>Explore</h2></div>
  <div class="panel optimize"><div class="body"><button class="big"><svg class="i22"><use href="#grade"/></svg>Grading<br>Optimization</button></div><h2>Optimize</h2></div>
  <div class="panel ground">
    <div class="body"><div class="col">
      <button><svg class="ic"><use href="#pt"/></svg>Points<i class="ar"></i></button>
      <button><svg class="ic"><use href="#surf"/></svg>Surfaces<i class="ar"></i></button>
      <button><svg class="ic"><use href="#trav"/></svg>Traverse<i class="ar"></i></button>
    </div></div>
    <h2>Create Ground Data <i class="ar lg"></i></h2>
  </div>
  <div class="panel design">
    <div class="body">
      <div class="col">
        <button><svg class="ic"><use href="#parcel"/></svg>Parcel<i class="ar"></i></button>
        <button><svg class="ic"><use href="#fline"/></svg>Feature Line<i class="ar"></i></button>
        <button><svg class="ic"><use href="#grading"/></svg>Grading<i class="ar"></i></button>
      </div>
      <div class="col">
        <button><svg class="ic"><use href="#align"/></svg>Alignment<i class="ar"></i></button>
        <button><svg class="ic"><use href="#profile"/></svg>Profile<i class="ar"></i></button>
        <button><svg class="ic"><use href="#corr"/></svg>Corridor<i class="ar"></i></button>
      </div>
      <div class="col">
        <button><svg class="ic"><use href="#inter"/></svg>Intersections<i class="ar"></i></button>
        <button><svg class="ic"><use href="#assem"/></svg>Assembly<i class="ar"></i></button>
        <button><svg class="ic"><use href="#pipe"/></svg>Pipe Network<i class="ar"></i></button>
      </div>
    </div>
    <h2>Create Design <i class="ar lg"></i></h2>
  </div>
  <div class="panel psv">
    <div class="body"><div class="col">
      <button><svg class="ic"><use href="#profile"/></svg>Profile View<i class="ar"></i></button>
      <button><svg class="ic"><use href="#sline"/></svg>Sample Lines</button>
      <button><svg class="ic"><use href="#sview"/></svg>Section Views<i class="ar"></i></button>
    </div></div>
    <h2>Profile &amp; Section Views</h2>
  </div>
  <div class="panel draw">
    <div class="body">
      <div class="col">
        <button aria-label="Line"><svg class="ic"><use href="#line"/></svg><i class="ar"></i></button>
        <button aria-label="Points on line"><svg class="ic"><use href="#ptsx"/></svg><i class="ar"></i></button>
        <button aria-label="Spline"><svg class="ic"><use href="#spl"/></svg><i class="ar"></i></button>
      </div>
      <div class="col">
        <button aria-label="Arc"><svg class="ic"><use href="#arc"/></svg><i class="ar"></i></button>
        <button aria-label="Circle"><svg class="ic"><use href="#circ"/></svg><i class="ar"></i></button>
        <button aria-label="Ellipse"><svg class="ic"><use href="#ell"/></svg><i class="ar"></i></button>
      </div>
      <div class="col">
        <button aria-label="Polyline"><svg class="ic"><use href="#pline"/></svg></button>
        <button aria-label="Rectangle"><svg class="ic"><use href="#rect"/></svg><i class="ar"></i></button>
        <button aria-label="Hatch"><svg class="ic"><use href="#hatch"/></svg><i class="ar"></i></button>
      </div>
    </div>
    <h2>Draw <i class="ar lg"></i></h2>
  </div>
  <div class="panel modify">
    <div class="body">
      <div class="col">
        <button><svg class="ic"><use href="#move"/></svg>Move</button>
        <button><svg class="ic"><use href="#copy"/></svg>Copy</button>
        <button><svg class="ic"><use href="#stretch"/></svg>Stretch</button>
      </div>
      <div class="col">
        <button><svg class="ic"><use href="#rotate"/></svg>Rotate</button>
        <button><svg class="ic"><use href="#mirror"/></svg>Mirror</button>
        <button><svg class="ic"><use href="#scale"/></svg>Scale</button>
      </div>
      <div class="col spread">
        <button><svg class="ic"><use href="#trim"/></svg>Trim<i class="ar"></i></button>
        <button><svg class="ic"><use href="#fillet"/></svg>Fillet<i class="ar"></i></button>
        <button><svg class="ic"><use href="#array"/></svg>Array<i class="ar"></i></button>
      </div>
      <div class="col">
        <button aria-label="Erase"><svg class="ic"><use href="#erase"/></svg></button>
        <button aria-label="Explode"><svg class="ic"><use href="#cube"/></svg></button>
        <button aria-label="Offset"><svg class="ic"><use href="#off"/></svg></button>
      </div>
    </div>
    <h2>Modify <i class="ar lg"></i></h2>
  </div>
  <div class="panel layers">
    <div class="body">
      <button class="big"><svg class="i22"><use href="#layers"/></svg>Layer<br>Properties</button>
      <div class="laycol">
        <span class="combo laycombo"><svg class="ic"><use href="#bulb"/></svg><svg class="ic"><use href="#sun"/></svg><svg class="ic"><use href="#lock"/></svg><i class="swatch"></i><select aria-label="Layer"><option>0</option></select><i class="ar lg"></i></span>
        <div class="layrow">
          <button aria-label="Layer off"><svg class="ic"><use href="#l1"/></svg></button><button aria-label="Isolate"><svg class="ic"><use href="#l2"/></svg></button><button aria-label="Freeze"><svg class="ic"><use href="#l3"/></svg></button><button aria-label="Lock layer"><svg class="ic"><use href="#l4"/></svg></button><button><svg class="ic"><use href="#l5"/></svg>Make Current</button>
        </div>
        <div class="layrow">
          <button aria-label="Layers on"><svg class="ic"><use href="#m1"/></svg></button><button aria-label="Unisolate"><svg class="ic"><use href="#m2"/></svg></button><button aria-label="Thaw"><svg class="ic"><use href="#m3"/></svg></button><button aria-label="Unlock layer"><svg class="ic"><use href="#m4"/></svg></button><button><svg class="ic"><use href="#m5"/></svg>Match Layer</button>
        </div>
      </div>
    </div>
    <h2>Layers <i class="ar lg"></i></h2>
  </div>
  <div class="panel clip">
    <div class="body">
      <button class="big"><svg class="i22"><use href="#paste"/></svg>Paste<i class="ar"></i></button>
      <div class="col">
        <button aria-label="Cut"><svg class="ic"><use href="#cut"/></svg></button>
        <button aria-label="Copy clip"><svg class="ic"><use href="#dup"/></svg></button>
        <button aria-label="Paste special"><svg class="ic"><use href="#pspec"/></svg></button>
      </div>
    </div>
    <h2>Clipboard</h2>
  </div>
</section>

<nav class="filetabs" aria-label="Drawings">
  <button class="burger" aria-label="Drawing menu"><svg class="ic"><use href="#menu"/></svg></button>
  <i class="slash">/</i><button class="ftab">Start</button>
  <div class="ftab on"><button>IOWA-006 - CIVIL BASE*</button><button aria-label="Close tab"><svg class="i10"><use href="#close"/></svg></button></div>
  <button class="add" aria-label="New tab"><svg class="i10"><use href="#plus"/></svg></button><i class="slash">/</i>
</nav>

<main class="work">
  <aside class="toolspace" aria-label="Toolspace">
    <h2 class="phead"><i></i>TOOLSPACE</h2>
    <div class="tsbar"><svg class="ic"><use href="#cubeg"/></svg><span class="grow"></span><button aria-label="Toggle tree"><svg class="ic"><use href="#tree1"/></svg></button><button aria-label="Toggle panel"><svg class="ic"><use href="#panel"/></svg></button><button aria-label="Toolspace help"><svg class="ic"><use href="#help"/></svg></button></div>
    <div class="viewsel"><select aria-label="View"><option>Active Drawing View</option></select><svg viewBox="0 0 8 8"><path d="M1 2.500l3 3 3-3"/></svg></div>
    <div class="treebox">
      <ul class="tree">
        <li><i class="e f"></i><svg class="ic"><use href="#doc"/></svg><b>IOWA-006 - CIVIL BASE</b></li>
        <li><i class="g"></i><i class="t"></i><svg class="ic"><use href="#tpt"/></svg><span>Points</span></li>
        <li><i class="g"></i><i class="t"></i><svg class="ic"><use href="#tpg"/></svg><span>Point Groups</span></li>
        <li><i class="g"></i><i class="e"></i><svg class="ic"><use href="#tsf"/></svg><span>Surfaces</span></li>
        <li><i class="g"></i><i class="g"></i><i class="e p z"></i><svg class="ic"><use href="#tsf"/></svg><i class="ref"></i><span>IOWA-006-EG</span></li>
        <li><i class="g"></i><i class="e"></i><svg class="ic"><use href="#tal"/></svg><span>Alignments</span></li>
        <li><i class="g"></i><i class="g"></i><i class="e"></i><svg class="ic"><use href="#tal"/></svg><span>Centerline Alignments</span></li>
        <li><i class="g"></i><i class="g"></i><i class="g"></i><i class="e z"></i><svg class="ic"><use href="#tal"/></svg><i class="mark"></i><span class="sel">IOWA-006 - CL</span></li>
        <li><i class="g"></i><i class="g"></i><i class="g"></i><i></i><i class="t"></i><svg class="ic"><use href="#tse"/></svg><span>Superelevation Views</span></li>
        <li><i class="g"></i><i class="g"></i><i class="g"></i><i></i><i class="e"></i><svg class="ic"><use href="#tpf"/></svg><span>Profiles</span></li>
        <li><i class="g"></i><i class="g"></i><i class="g"></i><i></i><i class="g"></i><i class="t z"></i><svg class="ic"><use href="#teg"/></svg><i class="mark"></i><span>IOWA-006 - EG CL</span></li>
        <li><i class="g"></i><i class="g"></i><i class="g"></i><i></i><i class="e p"></i><svg class="ic"><use href="#tpv"/></svg><span>Profile Views</span></li>
        <li><i class="g"></i><i class="g"></i><i class="g"></i><i></i><i class="t z"></i><svg class="ic"><use href="#tsl"/></svg><span>Sample Line Groups</span></li>
        <li><i class="g"></i><i class="g"></i><i class="t"></i><svg class="ic"><use href="#tof"/></svg><span>Offset Alignments</span></li>
        <li><i class="g"></i><i class="g"></i><i class="t"></i><svg class="ic"><use href="#tcr"/></svg><span>Curb Return Alignments</span></li>
        <li><i class="g"></i><i class="g"></i><i class="t"></i><svg class="ic"><use href="#trl"/></svg><span>Rail Alignments</span></li>
        <li><i class="g"></i><i class="g"></i><i class="t"></i><svg class="ic"><use href="#trl"/></svg><span>Rail Diverted Alignments</span></li>
        <li><i class="g"></i><i class="g"></i><i class="t z"></i><svg class="ic"><use href="#tms"/></svg><span>Miscellaneous Alignments</span></li>
        <li><i class="g"></i><i class="t"></i><svg class="ic"><use href="#tfl"/></svg><span>Feature Lines</span></li>
        <li><i class="g"></i><i class="t"></i><svg class="ic"><use href="#tst"/></svg><span>Sites</span></li>
        <li><i class="g"></i><i class="e p"></i><svg class="ic"><use href="#ttn"/></svg><span>Turnouts and Crossovers</span></li>
        <li><i class="g"></i><i class="t"></i><svg class="ic"><use href="#tct"/></svg><span>Catchments</span></li>
        <li><i class="g"></i><i class="e p"></i><svg class="ic"><use href="#tpn"/></svg><span>Pipe Networks</span></li>
        <li><i class="g"></i><i class="t"></i><svg class="ic"><use href="#tpn"/></svg><span>Pressure Networks</span></li>
        <li><i class="g"></i><i class="t"></i><svg class="ic"><use href="#tbr"/></svg><span>Bridges</span></li>
        <li><i class="g"></i><i class="t"></i><svg class="ic"><use href="#tco"/></svg><span>Corridors</span></li>
      </ul>
      <div class="vscroll"><svg viewBox="0 0 8 8"><path d="M1 5.500l3-3 3 3"/></svg><i></i><span class="grow"></span><svg viewBox="0 0 8 8"><path d="M1 2.500l3 3 3-3"/></svg></div>
    </div>
    <div class="hscroll"><svg viewBox="0 0 8 8"><path d="M5.500 1l-3 3 3 3"/></svg><i></i><span class="grow"></span><svg viewBox="0 0 8 8"><path d="M2.500 1l3 3-3 3"/></svg></div>
    <div class="preview"></div>
  </aside>
  <nav class="vtabs left" aria-label="Toolspace tabs"><button class="on">Prospector</button><button>Settings</button><button>Toolbox</button></nav>

  <section class="canvas" aria-label="Drawing">
    <div class="vplabel"><button>[−]</button><button>[Top]</button><button>[2D Wireframe]</button></div>
    <svg class="drawing" viewBox="216 135 829 536" preserveAspectRatio="xMidYMid meet">
      <g fill="none" stroke="#e4e7e9"><circle cx="221" cy="152" r="1.500"/><circle cx="226" cy="153" r="1"/><path stroke-width="2" d="M219 158h4M225 157l3 1"/></g>
      <path stroke="#565d64" d="M429.500 282v207M452.500 282v207M475.500 282v207M498.500 282v207M521.500 282v207M544.500 282v207M567.500 282v207M590.500 282v207M613.500 282v207M636.500 282v207M659.500 282v207M682.500 282v207M705.500 282v207M728.500 282v207M751.500 282v207M774.500 282v207M797.500 282v207M820.500 282v207M843.500 282v207M866.500 282v207M889.500 282v207"/>
      <path stroke="#4d545b" d="M394 304.500h525M394 327.500h525M394 350.500h525M394 373.500h525M394 396.500h525M394 419.500h525M394 442.500h525M394 465.500h525M394 281.500h525M394 489.500h525"/>
      <path fill="none" stroke="#2fae33" stroke-width="1.300" d="M406 281.500h501.500v207.500H406z"/>
      <path fill="none" stroke="#9ba1a7" stroke-width="2.400" stroke-linejoin="round" d="M406 351l22 3.500 24 3 46 5 62 5 45 1.300 30-2 24-4v64.200l5 3 3-13 4-5v-47l27 5 27 1 25-3 28-2.500 34-5.500 31-6 25-7 21-7 18-8"/>
      <g class="elev" text-anchor="end"><text x="404" y="281">940</text><text x="404" y="304">935</text><text x="404" y="327">930</text><text x="404" y="350">925</text><text x="404" y="373">920</text><text x="404" y="396">915</text><text x="404" y="419">910</text><text x="404" y="442">905</text><text x="404" y="465">900</text><text x="404" y="488">895</text></g>
      <g class="elev"><text x="908" y="281">940</text><text x="908" y="304">935</text><text x="908" y="327">930</text><text x="908" y="350">925</text><text x="908" y="373">920</text><text x="908" y="396">915</text><text x="908" y="419">910</text><text x="908" y="442">905</text><text x="908" y="465">900</text><text x="908" y="488">895</text></g>
      <g class="elev" text-anchor="middle"><text x="405" y="495">10+00</text><text x="451" y="495">11+00</text><text x="497" y="495">12+00</text><text x="543" y="495">13+00</text><text x="590" y="495">14+00</text><text x="636" y="495">15+00</text><text x="682" y="495">16+00</text><text x="728" y="495">17+00</text><text x="774" y="495">18+00</text><text x="820" y="495">19+00</text><text x="866" y="495">20+00</text><text x="907" y="495">20+88</text></g>
      <circle cx="989.500" cy="190" r="36" fill="none" stroke="#41474e" stroke-width="8"/>
      <path fill="#b3b6b8" d="M973 173h34v34h-34z"/><path fill="#a3a7aa" d="M979 179h22v22h-22z"/>
      <g class="compass" text-anchor="middle"><text x="990" y="158">N</text><text x="989" y="233">S</text><text x="952" y="195">W</text><text x="1027" y="195">E</text><text class="top" x="990" y="193">TOP</text></g>
      <g fill="none" stroke="#c7cacd"><path d="M230 624v33.500h33M227.500 655h5v5h-5z"/><path d="M231 613l4 4 4-4M235 617v5M266 648l8 8M274 648l-8 8"/></g>
      <path stroke="#d4d6d8" d="M668.500 135v536M216 384.500h449M672 384.500h373"/>
      <path fill="none" stroke="#f0f1f2" d="M665.500 381.500h6v6h-6z"/>
    </svg>
    <button class="wcs">WCS <svg viewBox="0 0 8 6"><path d="M1 1h6L4 5z"/></svg></button>
    <div class="navbar">
      <svg viewBox="0 0 22 140"><g fill="none" stroke="#505457"><circle cx="11" cy="19" r="7"/><circle cx="11" cy="19" r="4"/><path d="M6 27h10M10 34h2M5 50c2 5 3 6 7 6 5 0 6-6 5-11l-2 3v-5l-2 4-1-5-2 5-2-4v8l-3-3zM4 60l6 6m0-6l-6 6M12 67l6 5M4 72h4"/><circle cx="14" cy="63" r="3"/><path d="M10 79h2M5 93h12M11 85v17M8 88l3-3 3 3M8 99l3 3 3-3M6 90l-2 3 2 3M16 90l2 3-2 3M10 107h2M4 112h3v3H4zM9 112h3v3H9zM14 112h3v3h-3zM4 118h10v8H4z"/></g><path fill="#505457" d="M7 119l5 3-5 3zM17 134l3-1v3z"/></svg>
    </div>
    <div class="cmd">
      <i class="grip"></i><button aria-label="Close command line"><svg class="ic"><use href="#close"/></svg></button>
      <button aria-label="Customize"><svg class="ic" viewBox="0 0 12 12"><path fill="none" stroke="#dfe2e5" stroke-width="1.800" d="M1 11l6-6M6 2c0 3 1 4 4 4"/></svg></button>
      <label class="cmdin"><svg viewBox="0 0 14 10"><path d="M.5.500h13v9H.5zM.5 2.500h13M3 4.500l1.500 1L3 6.500M6 7.500h3"/></svg><i class="ar"></i><input type="text" aria-label="Command" placeholder="Type a command"><i class="ar up"></i></label>
    </div>
  </section>

  <div class="strip" role="toolbar" aria-label="Drawing tools">
    <i class="sgrip"></i>
    <svg><use href="#flag"/></svg><svg><use href="#flagd"/></svg><svg><use href="#flags"/></svg><svg><use href="#flagn"/></svg><svg><use href="#sheet"/></svg><svg><use href="#globe"/></svg><svg><use href="#globe2"/></svg><svg><use href="#n1"/></svg><svg><use href="#n2"/></svg><svg><use href="#n3"/></svg><svg><use href="#n4"/></svg><svg><use href="#flags"/></svg><svg><use href="#bigP"/></svg>
    <i class="ssep"></i><svg><use href="#tcur"/></svg><i class="ssep"></i>
    <svg><use href="#hook"/></svg><svg><use href="#hook2"/></svg><svg><use href="#hook3"/></svg>
    <i class="ssep"></i><svg><use href="#ax1"/></svg><svg><use href="#ax2"/></svg><svg><use href="#ax3"/></svg><svg><use href="#ax4"/></svg><svg><use href="#ball"/></svg><svg><use href="#tri"/></svg><svg><use href="#acal"/></svg>
    <i class="sgrip"></i><svg><use href="#tcur"/></svg><svg><use href="#tbox"/></svg><svg><use href="#tdot"/></svg>
  </div>

  <nav class="vtabs right" aria-label="Property tabs"><button class="on">Design</button><button>Display</button><button>Extended Data</button><button>Object Class</button></nav>

  <aside class="props" aria-label="Properties">
    <h2 class="phead"><i></i>PROPERTIES</h2>
    <div class="selrow"><span class="combo"><select aria-label="Selection"><option>No selection</option></select><i class="ar lg"></i></span><button aria-label="Toggle pick add"><svg class="ic"><use href="#q1"/></svg></button><button aria-label="Select objects"><svg class="ic"><use href="#q2"/></svg></button><button aria-label="Quick select"><svg class="ic"><use href="#q3"/></svg></button></div>
    <table><colgroup><col class="c1"><col class="c2"><col></colgroup><thead><tr><th colspan="3">General<i class="ar lg"></i></th></tr></thead><tbody>
      <tr><td></td><td>Color</td><td><i class="swatch"></i>ByLayer</td></tr>
      <tr><td></td><td>Layer</td><td>0</td></tr>
      <tr><td></td><td>Linetype</td><td><i class="rule"></i>ByLayer</td></tr>
      <tr><td></td><td>Linetype scale</td><td>1.00</td></tr>
      <tr><td></td><td>Lineweight</td><td><i class="rule"></i>ByLayer</td></tr>
      <tr><td></td><td>Transparency</td><td>ByLayer</td></tr>
      <tr><td></td><td>Thickness</td><td>0.00</td></tr>
    </tbody></table>
    <table><colgroup><col class="c1"><col class="c2"><col></colgroup><thead><tr><th colspan="3">3D Visualization<i class="ar lg"></i></th></tr></thead><tbody>
      <tr><td></td><td>Material</td><td>ByLayer</td></tr>
    </tbody></table>
    <table><colgroup><col class="c1"><col class="c2"><col></colgroup><thead><tr><th colspan="3">Plot style<i class="ar lg"></i></th></tr></thead><tbody>
      <tr><td></td><td>Plot style</td><td class="dim">ByColor</td></tr>
      <tr><td></td><td>Plot style table</td><td>C:\Users\David\ap...</td></tr>
      <tr><td></td><td>Plot table attached to</td><td class="dim">Model</td></tr>
      <tr><td></td><td>Plot table type</td><td class="dim">Not available</td></tr>
    </tbody></table>
    <table><colgroup><col class="c1"><col class="c2"><col></colgroup><thead><tr><th colspan="3">View<i class="ar lg"></i></th></tr></thead><tbody>
      <tr><td></td><td>Center X</td><td class="dim">2283460.28</td></tr>
      <tr><td></td><td>Center Y</td><td class="dim">306412.94</td></tr>
      <tr><td></td><td>Center Z</td><td class="dim">0.00</td></tr>
      <tr><td></td><td>Height</td><td class="dim">1161.48</td></tr>
      <tr><td></td><td>Width</td><td class="dim">2621.67</td></tr>
    </tbody></table>
    <table><colgroup><col class="c1"><col class="c2"><col></colgroup><thead><tr><th colspan="3">Misc<i class="ar lg"></i></th></tr></thead><tbody>
      <tr><td></td><td>Annotation scale</td><td>1" = 50'</td></tr>
      <tr><td></td><td>UCS icon On</td><td>Yes</td></tr>
      <tr><td></td><td>UCS icon at origin</td><td>No</td></tr>
      <tr><td></td><td>UCS per viewport</td><td>Yes</td></tr>
      <tr><td></td><td>UCS Name</td><td></td></tr>
      <tr><td></td><td>Visual Style</td><td>2D Wireframe</td></tr>
    </tbody></table>
  </aside>
</main>

<footer class="status">
  <div class="layouts">
    <button class="burger" aria-label="Layout menu"><svg class="ic"><use href="#menu"/></svg></button>
    <button class="ltab on">Model</button><button class="ltab">24X36</button><i class="slash">/</i><button class="ltab">24X36 P&amp;P 50 SCALE</button><i class="slash">/</i><button class="ltab">24X36 XSECTION 50SCALE</button><i class="slash">/</i><button class="ltab">24X36 XSECTION 10SCALE</button><i class="slash">/</i>
    <button class="add" aria-label="New layout"><svg class="i10"><use href="#plus"/></svg></button><i class="slash">/</i>
  </div>
  <div class="toggles">
    <button class="txt">MODEL</button>
    <button aria-label="Grid"><svg class="ic"><use href="#grid"/></svg></button>
    <button aria-label="Snap"><svg class="ic"><use href="#dots"/></svg></button><i class="ar lg"></i>
    <button aria-label="Ortho"><svg class="ic"><use href="#ortho"/></svg></button>
    <button aria-label="Polar"><svg class="ic"><use href="#angle"/></svg></button>
    <button class="on" aria-label="Object snap"><svg class="ic"><use href="#osnap"/></svg></button><i class="ar lg"></i>
    <button class="on" aria-label="Annotation visibility"><svg class="ic"><use href="#ann2"/></svg></button>
    <button aria-label="Auto scale"><svg class="ic"><use href="#ann3"/></svg></button>
    <button aria-label="Annotation scale icon"><svg class="ic"><use href="#ann"/></svg></button>
    <button class="txt">1" = 50'</button><i class="ar lg"></i>
    <button class="wide" aria-label="Annotation monitor"><svg class="ic"><use href="#plus"/></svg></button>
    <button aria-label="Elevation"><svg class="ic"><use href="#stack"/></svg></button>
    <button class="txt">3.50</button>
    <button aria-label="Isolate objects"><svg class="ic"><use href="#tagb"/></svg></button><i class="ar lg"></i>
    <button class="on" aria-label="Tag"><svg class="ic"><use href="#tag"/></svg></button>
    <button aria-label="Graphics"><svg class="ic"><use href="#mon"/></svg></button>
    <button class="slim" aria-label="Hardware"><svg class="i10"><use href="#bluesq"/></svg></button>
    <button aria-label="Survey"><svg class="ic"><use href="#wall"/></svg></button>
    <button class="wide" aria-label="Clean screen"><svg class="ic"><use href="#full"/></svg></button>
    <button aria-label="Customization"><svg class="ic"><use href="#menu"/></svg></button>
  </div>
</footer>

<div class="taskbar">
  <button class="start" aria-label="Start"><svg viewBox="0 0 12 12"><path d="M0 2l5-1v4.500H0zM6 1l6-1v5.500H6zM0 6.500h5V11l-5-1zM6 6.500h6V12l-6-1z"/></svg></button>
  <label class="search"><svg viewBox="0 0 12 12"><circle cx="7.500" cy="4.500" r="3.700"/><path d="M5 7.500L.5 12"/></svg><input type="text" aria-label="Search" placeholder="Type here to search"><svg class="case" viewBox="0 0 48 24"><rect width="48" height="24" rx="4" fill="#eeeeec"/><path fill="none" stroke="#3a2c17" stroke-width="1.500" d="M21 6V3h7v3"/><rect x="14" y="5" width="21" height="14" rx="1" fill="#d98a1c"/><path fill="#a95f10" d="M14 12h21v6a1 1 0 0 1-1 1H15a1 1 0 0 1-1-1z"/><path fill="#f7d24a" d="M23 11h3v4h-3z"/></svg></label>
  <div class="apps">
    <button class="run" aria-label="File Explorer"><svg viewBox="0 0 16 16"><path fill="#f7d36b" d="M1 2h6l1 2h7v9H1z"/><path fill="#e9b43c" d="M1 2h6l1 2H1z"/><path fill="#4aa3df" d="M3 9h10v6h-3v-3H6v3H3z"/></svg></button>
    <button aria-label="Outlook"><svg viewBox="0 0 16 16"><path fill="#37a3e8" d="M5 1h10v13H5z"/><path fill="#1067b8" d="M5 8l5 3 6-4v7H5z"/><path fill="#0b5cab" d="M0 4h8v8H0z"/><circle cx="4" cy="8" r="2" fill="none" stroke="#fff" stroke-width="1.300"/></svg></button>
    <button class="run" aria-label="Chrome"><svg viewBox="0 0 16 16"><circle cx="8" cy="8" r="7.500" fill="#f4c430"/><path fill="#dc3f34" d="M8 8L1.500 4.200A7.500 7.500 0 0 1 15 5H8z"/><path fill="#289e50" d="M8 8v7.500A7.500 7.500 0 0 1 1.500 4.200L5 10z"/><circle cx="8" cy="8" r="3.500" fill="#fff"/><circle cx="8" cy="8" r="2.700" fill="#3f80ea"/></svg></button>
    <button aria-label="Excel"><svg viewBox="0 0 16 16"><path fill="#2aa565" d="M4 1h12v14H4z"/><path fill="#15753f" d="M10 5h6v5h-6z"/><path fill="#107040" d="M0 4h9v9H0z"/><path stroke="#fff" stroke-width="1.300" d="M2.500 6l4 5M6.500 6l-4 5"/></svg></button>
    <button class="run" aria-label="Word"><svg viewBox="0 0 16 16"><path fill="#41a0ea" d="M4 1h12v14H4z"/><path fill="#1b59b8" d="M4 8h12v7H4z"/><path fill="#1646a0" d="M0 4h9v9H0z"/><path fill="none" stroke="#fff" stroke-width="1.200" d="M2 6l1 5 1.500-4L6 11l1-5"/></svg></button>
    <button aria-label="R"><span class="rr">R</span></button>
    <button aria-label="QGIS"><svg viewBox="0 0 16 16"><circle cx="8" cy="8" r="5.500" fill="none" stroke="#7bb338" stroke-width="3"/><path stroke="#57932b" stroke-width="3" d="M8 8l6 6"/><path fill="#f0b52c" d="M7 7h3v3H7z"/></svg></button>
    <button aria-label="Teams"><svg viewBox="0 0 16 16"><circle cx="9" cy="3" r="2.500" fill="#7077d6"/><circle cx="14" cy="4" r="1.600" fill="#5158b8"/><path fill="#7077d6" d="M5 6h8v8l-4 2-4-2z"/><path fill="#5158b8" d="M13 6h3v6l-3 1z"/><path fill="#444ba6" d="M0 4h9v8H0z"/><path stroke="#fff" stroke-width="1.200" d="M2 6h5M4.500 6v5"/></svg></button>
    <button aria-label="Document"><svg viewBox="0 0 16 16"><path fill="#fafafa" stroke="#c5cfcd" d="M3 1h7l3 3v11H3z"/><path fill="#d5dbda" d="M10 1v3h3z"/></svg></button>
    <button aria-label="Survey tool"><svg viewBox="0 0 16 16"><path fill="none" stroke="#b3241c" stroke-width="2.500" d="M1 2h7L3 13"/><path fill="none" stroke="#1f2226" stroke-width="4" d="M15 1L2 14M6 6l9 9"/><path stroke="#33b491" stroke-width="2" d="M15 1L4 12M8 8l6 6"/></svg></button>
    <button class="run" aria-label="OBS"><svg viewBox="0 0 16 16"><circle cx="7.500" cy="7.500" r="7" fill="#29282c"/><path fill="none" stroke="#8a8a8e" d="M5 3c3 0 4 2 3 4M4 10c1-2 3-3 4-2"/><circle cx="11" cy="11" r="4.500" fill="#e31616"/></svg></button>
    <button aria-label="Calculator"><svg viewBox="0 0 16 16"><path fill="#566873" d="M2 0h12v16H2z"/><path fill="#4dc5e3" d="M3.500 1.500h9v3h-9z"/><path stroke="#d6e2e6" stroke-width="2" stroke-dasharray="2 1.500" d="M3.500 7h9M3.500 10h9M3.500 13h9"/></svg></button>
    <button aria-label="Notepad"><svg viewBox="0 0 16 16"><path fill="#7fb9c2" d="M6 2h9l-2 11-11 1z"/><path fill="#c2e4e8" d="M5 4h8l-4 8H1z"/><path fill="#4c7780" d="M13 4l2-1-2 10-4-1z"/></svg></button>
    <button aria-label="Acrobat"><svg viewBox="0 0 16 16"><rect x="1" y="1" width="14" height="14" rx="2" fill="#b0100f"/><path fill="none" stroke="#fff" stroke-width="1.200" d="M3 12c3-1 5-5 5-8-1-2-1 5 5 6-3-1-6 0-8 1"/></svg></button>
    <button aria-label="Terrain"><svg viewBox="0 0 16 16"><path fill="#f4efcf" stroke="#37404a" d="M1 7c0-3 3-2 4-4 2-2 5-1 5 1 2 0 4 1 5 4z"/><path fill="#16355e" d="M0 8h16v7H0z"/><path stroke="#4d87c9" stroke-width="1.500" d="M1 11c5-2 8 1 14 1"/></svg></button>
    <button class="run cur" aria-label="Civil 3D"><svg viewBox="0 0 16 16"><path fill="#a5106b" d="M1 0h14v16H1z"/><path fill="#6f0a48" d="M1 0h3v16H1z"/><path fill="none" stroke="#fff" stroke-width="1.600" d="M11 4c-4-2-5 4-1 4h1"/><path stroke="#e5a8cd" stroke-width="1.500" stroke-dasharray="2 1" d="M5 12.500h8"/></svg></button>
    <button aria-label="Autodesk app"><svg viewBox="0 0 16 16"><path fill="#d9edf6" d="M0 0h16v16H0z"/><path fill="none" stroke="#1d6a9c" stroke-width="2" d="M3 12L7 2l4 10M5 9h5"/><path stroke="#63b3d6" stroke-width="1.500" d="M11 13.500h4"/></svg></button>
    <button aria-label="Hydro"><svg viewBox="0 0 16 16"><rect width="16" height="16" rx="2" fill="#14878a"/><path fill="none" stroke="#c8f0ec" stroke-width="1.300" d="M2 8l2 4 2-7 2 7 2-7 2 6 2-4M2 4h12"/></svg></button>
    <button aria-label="Media player"><svg viewBox="0 0 16 16"><path fill="#b7cfdc" stroke="#83a3b6" d="M2 2h12v12H2z"/><circle cx="7" cy="8" r="5" fill="#ec873b"/><path fill="#fff" d="M5.500 5l5 3-5 3z"/></svg></button>
    <button aria-label="Snipping tool"><svg viewBox="0 0 16 16"><path fill="#f8f0f0" stroke="#cc7d80" d="M1 7c0-4 5-6 9-5s6 4 4 6-9 3-13-1z"/><path fill="none" stroke="#3d8fc8" stroke-width="1.500" d="M7 8l5 7M13 9l-6 5"/></svg></button>
    <button aria-label="Sticky notes"><svg viewBox="0 0 16 16"><path fill="#3a3c40" d="M0 1h16v14H0z"/><path fill="#f6d62b" d="M8 8h7l-4 6H8z"/></svg></button>
  </div>
  <div class="tray">
    <button class="weather"><svg viewBox="0 0 18 16"><circle cx="12" cy="6" r="5" fill="#f2a23b"/><path fill="#a9c6ec" d="M1 11c0-3 3-4 4-3 1-3 6-3 7 0 3 0 5 1 5 3s-1 4-4 4H5c-2 0-4-1-4-4z"/></svg>13°F&ensp;Mostly cloudy</button>
    <div class="sys"><svg viewBox="0 0 12 12"><path d="M1.500 8L6 3.500 10.500 8"/></svg><svg viewBox="0 0 12 12"><rect x="4" y="0" width="4" height="8" rx="2" fill="#111"/><path d="M2.500 5c0 6 7 6 7 0M6 9v3"/></svg><svg viewBox="0 0 12 12"><path d="M2.500 3.500h5v6h-5zM7.500 5.500l3-1v4l-3-1M3 1.500h6M3 11.500h5"/></svg><svg viewBox="0 0 12 12"><path d="M.5 4.500h2L5 2v8L2.500 7.500h-2zM7 4c1 1 1 3 0 4M9 2.500c2 2 2 5 0 7M11 1c2 3 2 7 0 10"/></svg></div>
    <div class="clock"><span>3:01 PM</span><span>1/22/2025</span></div>
    <button class="note" aria-label="Notifications"><svg viewBox="0 0 12 12"><path fill="#111" d="M0 1h12v8H7l-3 3V9H0z"/><path stroke="#cfe9e6" d="M2 3.500h8M2 5.500h8"/></svg><b>2</b></button>
  </div>
</div>
</body>
</html>
```
FILE: styles.css
```css
* { box-sizing: border-box; }
html, body { height: 100%; }
body {
  margin: 0;
  display: flex;
  flex-direction: column;
  overflow: hidden;
  background: #222932;
  color: #dcdfe2;
  font: 8px/12px Roboto, "Noto Sans", sans-serif;
  white-space: nowrap;
}
button { display: flex; align-items: center; margin: 0; padding: 0; border: 0; background: none; color: inherit; font: inherit; white-space: nowrap; }
input, select { min-width: 0; margin: 0; padding: 0; border: 0; background: none; color: inherit; font: inherit; outline: 0; appearance: none; }
h1, h2 { margin: 0; font: inherit; }
ul { margin: 0; padding: 0; list-style: none; }
svg { display: block; flex: none; }
.defs { position: absolute; width: 0; height: 0; }
.ic { width: 12px; height: 12px; }
.i10 { width: 10px; height: 10px; }
.i22 { width: 22px; height: 22px; }
.grow { flex: 1; }
.ar { flex: none; width: 4px; height: 2px; background: #b8bdc3; clip-path: polygon(0 0, 100% 0, 50% 100%); }
.ar.lg { width: 6px; height: 3px; background: #e4e7e9; }
.ar.right { width: 3px; height: 6px; background: #e4e7e9; clip-path: polygon(0 0, 100% 50%, 0 100%); }
.ar.up { background: #3a3f44; clip-path: polygon(50% 0, 100% 100%, 0 100%); }
.swatch { flex: none; width: 10px; height: 9px; background: #fff; }
.combo { display: flex; align-items: center; background: #454f5f; }
.combo select { flex: 1; }

/* title bar */
.titlebar { display: flex; align-items: center; height: 18px; flex: none; }
.quick, .account { display: flex; align-items: center; gap: 4px; }
.quick { padding-left: 10px; }
.logo { width: 16px; height: 16px; justify-content: center; background: #a3116b; border-left: 3px solid #700b49; color: #fff; font-size: 10px; font-weight: 700; }
.first { margin-left: 4px; }
.workspace { width: 118px; height: 13px; padding: 0 3px 0 1px; gap: 2px; }
.custom { width: 6px; height: 4px; }
.share { gap: 2px; color: #7cc0ee; }
.apptitle { flex: 1; display: flex; justify-content: center; gap: 8px; }
.keyword { width: 118px; height: 13px; padding: 0 2px; background: #454f5f; font-style: italic; }
.keyword::placeholder { color: #c3c8ce; }
.who { gap: 2px; }
.bar { width: 1px; height: 12px; background: #4b535c; }
.wincontrols { display: flex; gap: 18px; padding: 0 10px 0 52px; }
.wincontrols.doc { gap: 9px; padding: 0 5px 0 0; }

/* menu bar and ribbon tabs */
.menubar { display: flex; justify-content: space-between; align-items: center; height: 15px; flex: none; border-bottom: 1px solid #39414b; color: #b6bbc1; }
.menus { display: flex; justify-content: space-between; width: 808px; padding-left: 10px; }
.menus + .doc { color: #c9cdd1; }
.ribbontabs { display: flex; align-items: flex-end; height: 16px; flex: none; gap: 5px; color: #b6bbc1; }
.tabs { display: flex; justify-content: space-between; width: 778px; padding-left: 3px; }
.tabs button { height: 14px; padding: 0 5px; }
.tabs .on { background: #3b454f; color: #eceef0; }
.tabs .geo { background: #1b7291; color: #fff; padding: 0 7px; }
.collapse { width: 10px; height: 6px; margin: 0 0 4px 10px; justify-content: center; background: #f0f1f2; }
.collapse i { width: 4px; height: 2px; background: #222932; clip-path: polygon(50% 0, 100% 100%, 0 100%); }
.ribbontabs > .ar { margin-bottom: 6px; }

/* ribbon */
.ribbon { display: flex; height: 66px; flex: none; padding-left: 2px; background: #3b454f; }
.panel { display: flex; flex-direction: column; flex: none; border-right: 1px solid #2b333c; }
.panel h2 { display: flex; align-items: center; justify-content: center; gap: 5px; height: 15px; }
.panel .body { display: flex; height: 51px; padding-top: 3px; }
.col { display: flex; flex-direction: column; }
.col button { height: 16px; gap: 4px; }
.big { flex-direction: column; justify-content: flex-start; gap: 1px; line-height: 10px; text-align: center; }
.big svg { margin-top: 1px; }
.big .ar { margin-top: 2px; }
.minis { display: grid; grid-template-columns: 16px 16px; }
.minis button { justify-content: center; height: 16px; }
.minis .on { background: #41607a; border: 1px solid #6292b8; }
.palettes { width: 74px; }
.palettes .big { width: 40px; gap: 3px; margin-right: 1px; }
.big.on { height: 48px; background: #41607a; border: 1px solid #6fa5cc; }
.explore { width: 36px; }
.optimize { width: 54px; }
.explore .body, .optimize .body, .ground .body { justify-content: center; }
.ground { width: 86px; }
.design { width: 214px; }
.design .body { padding-left: 4px; }
.design .col:nth-child(-n+2) { width: 66px; }
.design .col:first-child { width: 70px; }
.psv { width: 89px; }
.psv .body { padding-left: 8px; }
.draw { width: 78px; }
.draw .body { padding-left: 5px; }
.draw .col { width: 25px; }
.modify { width: 167px; }
.modify .body { padding-left: 5px; gap: 2px; }
.modify .col { width: 46px; gap: 0; }
.modify .col button { gap: 2px; }
.modify .spread .ar { margin-left: auto; margin-right: 6px; }
.modify .col:last-child { width: 12px; }
.layers { width: 183px; }
.layers .big { width: 40px; margin-right: 2px; }
.laycol { flex: 1; padding-right: 2px; }
.laycombo { height: 14px; margin: 1px 0; padding: 0 2px 0 1px; gap: 1px; background: #48526a; }
.laycombo .swatch { margin: 0 3px 0 1px; }
.layrow { display: flex; gap: 4px; }
.layrow button { height: 16px; gap: 3px; }
.clip { width: 55px; border-right: 0; }
.clip .big { width: 36px; margin-right: 1px; }

/* drawing tabs */
.filetabs { display: flex; align-items: center; height: 18px; flex: none; }
.burger { width: 30px; justify-content: center; }
.slash { width: 6px; color: #59626c; font-style: normal; font-size: 10px; }
.filetabs .ftab { color: #eceef0; padding: 0 2px; }
.filetabs .ftab.on { display: flex; align-items: center; gap: 4px; height: 18px; margin-left: 4px; padding: 0 5px 0 9px; background: #3b454f; clip-path: polygon(5px 0, 100% 0, calc(100% - 5px) 100%, 0 100%); font-family: "Open Sans", sans-serif; font-weight: 600; }
.add { margin: 0 8px; }

/* work area */
.work { display: flex; flex: 1; min-height: 0; padding-top: 2px; background: #3b454f; }
.phead { display: flex; align-items: center; gap: 4px; height: 15px; flex: none; padding-left: 4px; background: #2a323c; }
.phead i { width: 2px; height: 7px; background: #59626c; }
.toolspace { display: flex; flex-direction: column; width: 199px; flex: none; padding-bottom: 3px; }
.tsbar { display: flex; align-items: center; gap: 6px; height: 20px; flex: none; padding: 0 3px; }
.viewsel { display: flex; align-items: center; height: 14px; flex: none; padding: 0 2px; background: #e4e4e4; color: #222; }
.viewsel select { flex: 1; }
.viewsel svg, .vscroll svg, .hscroll svg { width: 8px; height: 8px; fill: none; stroke: #333; stroke-width: 1; }
.treebox { display: flex; flex: 1; min-height: 0; margin-top: 2px; background: #fff; color: #1b1b1b; overflow: hidden; }
.tree { flex: 1; min-width: 0; padding: 1px 0 0 3px; }
.tree li { display: flex; align-items: center; height: 13px; }
.tree li:nth-child(3n) { height: 14px; }
.tree li > i { position: relative; flex: none; align-self: stretch; width: 13px; }
.tree span, .tree b { padding-left: 4px; }
.tree b { padding-left: 5px; font-family: "Open Sans", sans-serif; font-weight: 700; }
.tree .g { background: linear-gradient(#c6c6c6, #c6c6c6) 6px 0 / 1px 100% no-repeat; }
.tree .t, .tree .e { background: linear-gradient(#c6c6c6, #c6c6c6) 6px 0 / 1px 100% no-repeat, linear-gradient(#c6c6c6, #c6c6c6) 6px 6px / 7px 1px no-repeat; }
.tree .z { background-size: 1px 7px, 7px 1px; }
.tree .f { background: linear-gradient(#c6c6c6, #c6c6c6) 6px 6px / 1px 100% no-repeat; }
.tree .e::before { content: ""; position: absolute; left: 3px; top: 3px; width: 7px; height: 7px; border: 1px solid #b0b0b0; background: linear-gradient(#666, #666) center / 3px 1px no-repeat #fff; }
.tree .p::before { background: linear-gradient(#666, #666) center / 3px 1px no-repeat, linear-gradient(#666, #666) center / 1px 3px no-repeat, #fff; }
.tree li > .ref { align-self: center; width: 5px; height: 5px; margin: 2px 0 0 7px; border: 1px solid #777; }
.tree li > .mark { width: 10px; background: linear-gradient(135deg, #d79a2a 50%, transparent 50%) 2px 2px / 5px 5px no-repeat; }
.tree .sel { flex: 1; margin: 0 1px 0 4px; padding-left: 2px; background: #9d9d9d; }
.vscroll { display: flex; flex-direction: column; align-items: center; width: 11px; padding: 2px 0; background: #f0f0f0; }
.vscroll i { width: 9px; height: 210px; margin-top: 2px; background: #cdcdcd; }
.hscroll { display: flex; align-items: center; height: 11px; flex: none; padding: 0 14px 0 3px; background: #f0f0f0; }
.hscroll i { width: 84px; height: 9px; margin-left: 2px; background: #cdcdcd; }
.preview { height: 123px; flex: none; margin-top: 6px; border: 1px solid #7b838b; }

.vtabs { display: flex; flex-direction: column; flex: none; width: 17px; padding: 17px 4px 0 1px; }
.vtabs button { justify-content: center; height: 81px; writing-mode: vertical-rl; transform: rotate(180deg); border-top: 1px solid #222932; background: #2c343e; color: #a8aeb4; border-radius: 3px 0 0 3px; }
.vtabs .on { background: #3b454f; color: #c6cbd0; }
.vtabs.right { width: 19px; padding: 17px 0 0 5px; }
.vtabs.right button { border-radius: 0 3px 3px 0; }

.canvas { position: relative; flex: 1; min-width: 0; background: #21282f; overflow: hidden; }
.vplabel { display: flex; padding: 4px 2px; color: #c6cacd; }
.drawing { position: absolute; inset: 0; width: 100%; height: 100%; z-index: 2; pointer-events: none; }
.elev { fill: #e3ea2c; font: 700 4px "Liberation Sans", sans-serif; }
.compass { fill: #b9bcbf; font: 700 15px "Liberation Sans", sans-serif; }
.compass .top { fill: #4a4f54; font-size: 9px; }
.wcs { position: absolute; top: 113px; right: 39px; width: 32px; height: 11px; padding: 0 3px 0 2px; justify-content: space-between; border-radius: 2px; border: 1px solid #bcbfc1; background: #9a9da0; color: #e4e5e6; }
.wcs svg { width: 7px; height: 5px; fill: none; stroke: #c4c6c8; }
.navbar { position: absolute; top: 142px; right: 2px; width: 22px; height: 141px; border-radius: 3px; border: 1px solid #75797c; background: #676b6e; }
.cmd { position: absolute; left: 88px; right: 87px; bottom: 1px; display: flex; align-items: center; gap: 3px; height: 16px; background: #2c333b; }
.grip { width: 4px; height: 11px; background: repeating-linear-gradient(#8c949c 0 1px, transparent 1px 2px); }
.cmdin { display: flex; align-items: center; flex: 1; gap: 3px; height: 16px; padding: 0 3px; background: #b9bcbd; color: #33383d; }
.cmdin svg { width: 12px; height: 9px; fill: none; stroke: #50565b; }
.cmdin .ar { background: #50565b; }
.cmdin input { flex: 1; font: italic 700 8px "Liberation Mono", monospace; }
.cmdin input::placeholder { color: #63686c; }

.strip { display: flex; flex-direction: column; align-items: center; align-self: flex-start; width: 16px; flex: none; margin: 1px 0 0 4px; border: 1px solid #2c343e; }
.strip svg { width: 12px; height: 12px; margin: 1px 0 2px; }
.strip svg:nth-of-type(3n) { margin-bottom: 1px; }
.sgrip { width: 10px; height: 2px; margin: 1px 0 2px; background: #6b747d; }
.strip svg + .sgrip { margin: 3px 0 3px; }
.ssep { width: 13px; height: 1px; margin: 1px 0; background: #dfe2e5; }

.props { width: 196px; flex: none; }
.props .phead { padding-left: 3px; }
.selrow { display: flex; align-items: center; gap: 4px; height: 14px; margin: 9px 7px 3px 4px; }
.selrow .combo { flex: 1; height: 14px; margin-right: 2px; padding: 0 3px 0 2px; background: #48526a; }
.props table { width: 178px; margin: 0 0 2px 6px; border-collapse: separate; border-spacing: 0; table-layout: fixed; }
.props .c1 { width: 12px; }
.props .c2 { width: 86px; }
.props tr { height: 13px; }
.props tbody tr:nth-child(3n) { height: 12px; }
.props th, .props td { padding: 0 0 0 2px; line-height: 10px; text-align: left; }
.props th { position: relative; padding-left: 5px; background: #2a323c; color: #f0f2f3; font-family: "Open Sans", sans-serif; font-weight: 700; }
.props th .ar { position: absolute; right: 5px; top: 5px; }
.props td { border-right: 1px solid #303943; border-bottom: 1px solid #303943; }
.props tbody td:nth-child(1) { border-bottom: 0; }
.props tbody td:nth-child(2) { padding-left: 4px; color: #c2c7cc; }
.props td.dim { color: #8d949b; }
.props td .swatch { display: inline-block; margin-right: 4px; vertical-align: -1px; }
.rule { display: inline-block; width: 36px; height: 1px; margin-right: 3px; background: #b8bdc3; vertical-align: 3px; }

/* layout tabs and status toggles */
.status { display: flex; justify-content: space-between; height: 22px; flex: none; border-top: 2px solid #3b454f; }
.layouts, .toggles { display: flex; align-items: center; }
.ltab { height: 16px; padding: 0 5px; color: #d5d8db; }
.ltab.on { padding: 0 9px; background: #3b454f; color: #fff; font-family: "Open Sans", sans-serif; font-weight: 700; clip-path: polygon(5px 0, 100% 0, calc(100% - 5px) 100%, 0 100%); }
.toggles { padding-right: 1px; }
.toggles button { justify-content: center; width: 16px; height: 16px; background: #2f3741; }
.toggles button.on { background: #5a8fbf; color: #fff; }
.toggles .txt { width: auto; padding: 0 3px; }
.toggles .wide { width: 20px; margin: 0 1px; }
.toggles .slim { width: 12px; }
.toggles .ar { margin: 0 3px; }

/* taskbar */
.taskbar { display: flex; height: 27px; flex: none; background: #c8ebe6; color: #1d2325; font-size: 9px; }
.start { width: 32px; justify-content: center; }
.start svg { width: 12px; height: 12px; }
.search { display: flex; align-items: center; gap: 7px; width: 191px; margin-right: 2px; padding: 0 2px 0 8px; background: #fff; color: #333; font-size: 10px; }
.search > svg:first-child { width: 11px; height: 11px; fill: none; stroke: #333; }
.search input { flex: 1; }
.search input::placeholder { color: #4a4a4a; }
.search .case { width: 48px; height: 24px; }
.apps { display: flex; width: 687px; }
.apps button { flex: 1; justify-content: center; border-bottom: 2px solid transparent; }
.apps svg { width: 16px; height: 16px; }
.apps .run { border-bottom-color: #52696b; background-clip: padding-box; }
.apps .cur { background: #eefaf8; }
.rr { width: 16px; border-radius: 8px; background: #7da7d3; color: #e8f0f8; font: 700 12px/16px "Liberation Serif", serif; text-align: center; }
.tray { display: flex; align-items: center; flex: 1; justify-content: flex-end; gap: 12px; padding-right: 12px; }
.weather { gap: 5px; margin-right: 2px; }
.weather svg { width: 18px; height: 16px; }
.sys { display: flex; gap: 4px; }
.sys svg { width: 12px; height: 12px; fill: none; stroke: #222; }
.clock { display: flex; flex-direction: column; align-items: center; font-size: 8px; line-height: 13px; }
.note { position: relative; width: 18px; height: 18px; }
.note svg { width: 12px; height: 12px; }
.note b { position: absolute; right: 0; bottom: 0; width: 10px; height: 10px; border: 1px solid #7d8c8b; border-radius: 5px; background: #dcecea; font: 8px/8px Roboto, sans-serif; text-align: center; }
```
